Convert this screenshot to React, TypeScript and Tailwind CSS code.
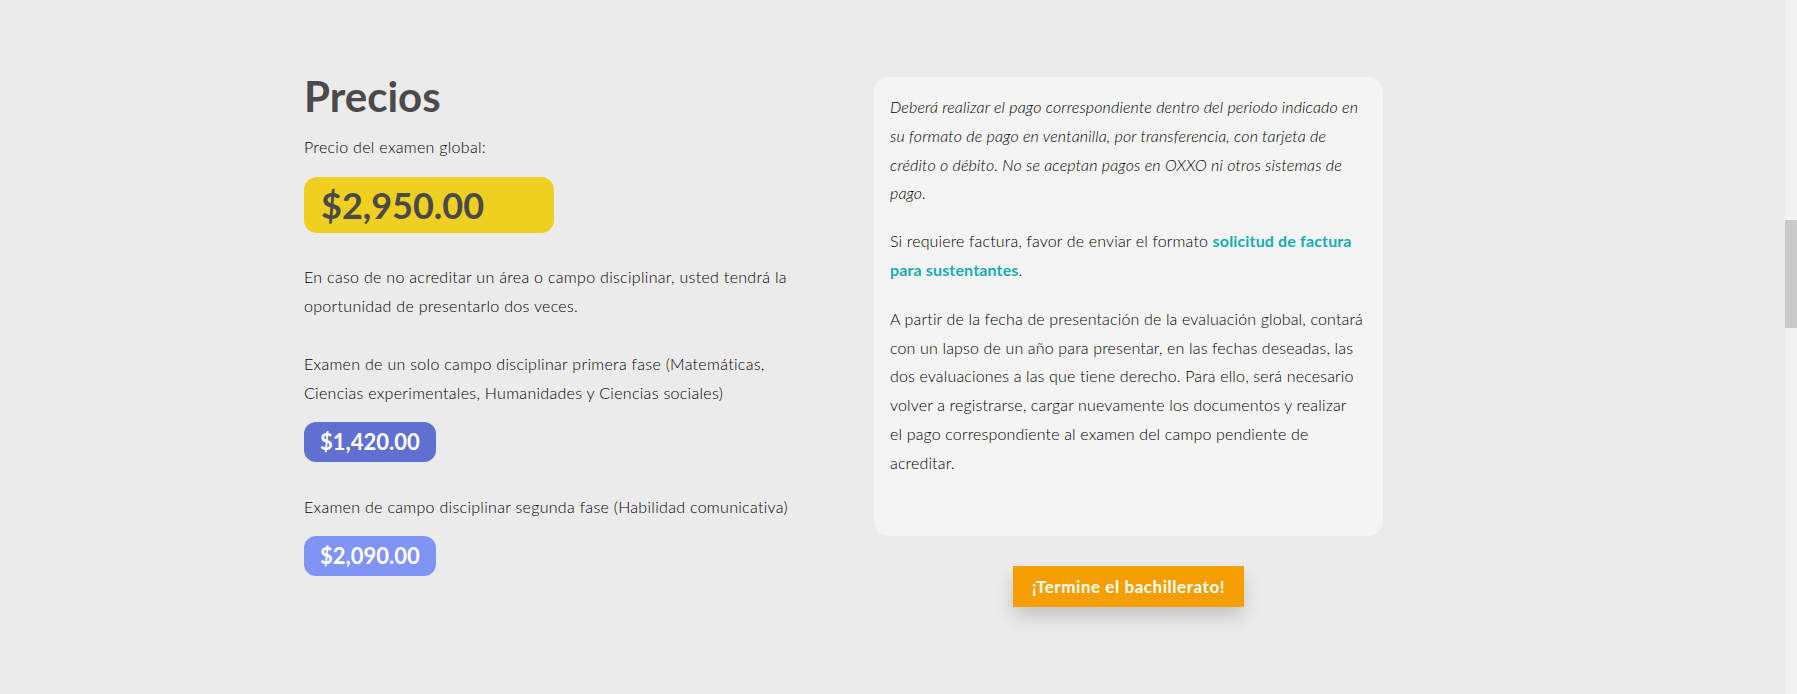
const prices = [
  {
    label:
      "Examen de un solo campo disciplinar primera fase (Matemáticas, Ciencias experimentales, Humanidades y Ciencias sociales)",
    amount: "$1,420.00",
    color: "bg-[#5f70d1]",
  },
  {
    label: "Examen de campo disciplinar segunda fase (Habilidad comunicativa)",
    amount: "$2,090.00",
    color: "bg-[#8094f6]",
  },
];

export default function App() {
  return (
    <div className="flex h-[694px] w-full bg-[#ebebeb] font-['Lato','Liberation_Sans',sans-serif] text-[16px] leading-[28.8px] text-[#000]">
      <main className="flex flex-1 gap-[80px] pl-[304px] pt-[72px]">
        {/* precios */}
        <section className="w-[490px] tracking-[0.3px]">
          <h2 className="mb-[13px] text-[42px] font-bold leading-[48px] tracking-normal text-[#4a4a4a]">
            Precios
          </h2>
          <p className="mb-[15px] font-light">Precio del examen global:</p>
          <div className="mb-[30px] h-[56px] w-[250px] rounded-[13px] bg-[#efcf1f] pl-[17px] text-[36px] font-bold leading-[56px] tracking-normal text-[#4a4a4a]">
            $2,950.00
          </div>
          <p className="mb-[30px] font-light">
            En caso de no acreditar un área o campo disciplinar, usted tendrá la
            oportunidad de presentarlo dos veces.
          </p>
          {prices.map((p) => (
            <div key={p.amount} className="mb-[31px]">
              <p className="mb-[14px] font-light">{p.label}</p>
              <div
                className={`${p.color} w-fit rounded-[12px] px-4 text-[22px] font-bold leading-[40px] tracking-normal text-white`}
              >
                {p.amount}
              </div>
            </div>
          ))}
        </section>

        {/* info */}
        <section className="flex w-[509px] flex-col items-center pt-[5px]">
          <div className="w-full rounded-[15px] bg-[#f4f4f4] px-4 pb-[58px] pt-4 font-light tracking-[0.15px]">
            <p className="mb-[19px] italic">
              Deberá realizar el pago correspondiente dentro del periodo indicado
              en su formato de pago en ventanilla, por transferencia, con tarjeta
              de crédito o débito. No se aceptan pagos en OXXO ni otros sistemas
              de pago.
            </p>
            <p className="mb-[20px]">
              Si requiere factura, favor de enviar el formato{" "}
              <a href="#" className="font-bold text-[#15adb1]">
                solicitud de factura para sustentantes
              </a>
              .
            </p>
            <p>
              A partir de la fecha de presentación de la evaluación global,
              contará con un lapso de un año para presentar, en las fechas
              deseadas, las dos evaluaciones a las que tiene derecho. Para ello,
              será necesario volver a registrarse, cargar nuevamente los
              documentos y realizar
              <br />
              el pago correspondiente al examen del campo pendiente de
              acreditar.
            </p>
          </div>
          <a
            href="#"
            className="mt-[30px] bg-[#f59e00] px-[19px] text-[17px] font-bold leading-[41px] tracking-[0.55px] text-white shadow-[0_10px_18px_rgba(0,0,0,0.16)]"
          >
            ¡Termine el bachillerato!
          </a>
        </section>
      </main>

      {/* scrollbar */}
      <aside className="w-[12px] bg-[#f1f1f1]">
        <div className="mt-[220px] h-[108px] bg-[#c9c9c9]" />
      </aside>
    </div>
  );
}
